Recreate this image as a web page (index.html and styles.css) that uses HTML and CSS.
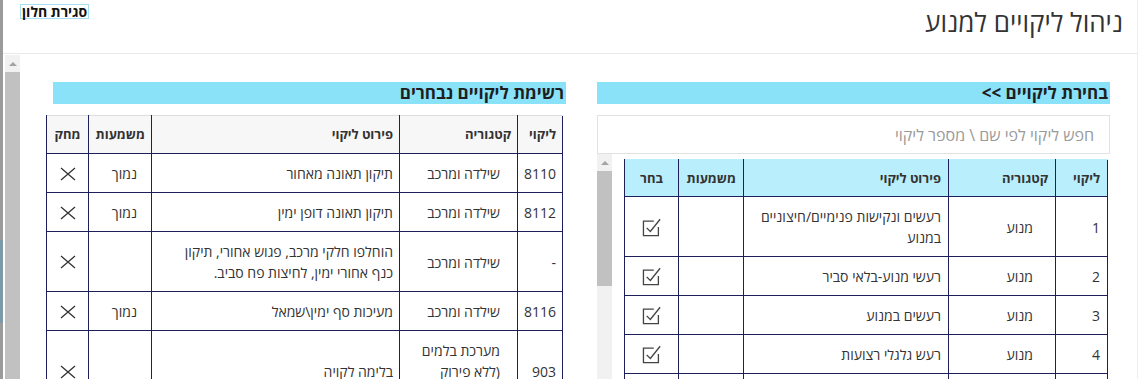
FILE: index.html
```html
<!DOCTYPE html>
<html lang="he">
<head>
<meta charset="utf-8">
<title>ניהול ליקויים למנוע</title>
<link rel="stylesheet" href="styles.css">
</head>
<body>
<div class="frame">
  <div class="edge"><div class="edge-mark"></div></div>
  <div class="window">
    <header class="topbar">
      <button class="close-btn" dir="rtl">סגירת חלון</button>
      <h1 class="title" dir="rtl">ניהול ליקויים למנוע</h1>
    </header>
    <div class="main">
      <div class="scrollbar page-scroll"><div class="sb-arrow"></div><div class="sb-thumb page-thumb"></div></div>
      <div class="content" dir="rtl">
        <section class="panel">
          <div class="panel-head">בחירת ליקויים &gt;&gt;</div>
          <input class="search" type="text" placeholder="חפש ליקוי לפי שם \ מספר ליקוי">
          <div class="pick-box">
            <table class="grid pick">
              <colgroup><col class="c-num"><col class="c-cat"><col class="c-det"><col class="c-mean"><col class="c-act"></colgroup>
              <thead>
                <tr><th>ליקוי</th><th>קטגוריה</th><th>פירוט ליקוי</th><th>משמעות</th><th class="act">בחר</th></tr>
              </thead>
              <tbody>
                <tr><td>1</td><td class="cat">מנוע</td><td>רעשים ונקישות פנימיים/חיצוניים<br>במנוע</td><td class="mean"></td><td class="act"><svg class="ico-check" viewBox="0 0 20 18" width="23" height="21"><path d="M12 3.5H3V16H16V8.5" fill="none" stroke="#444" stroke-width="1.15"/><path d="M5.8 9.3L9 12.5L17.5 1.8" fill="none" stroke="#444" stroke-width="1.15"/></svg></td></tr>
                <tr><td>2</td><td class="cat">מנוע</td><td>רעשי מנוע-בלאי סביר</td><td class="mean"></td><td class="act"><svg class="ico-check" viewBox="0 0 20 18" width="23" height="21"><path d="M12 3.5H3V16H16V8.5" fill="none" stroke="#444" stroke-width="1.15"/><path d="M5.8 9.3L9 12.5L17.5 1.8" fill="none" stroke="#444" stroke-width="1.15"/></svg></td></tr>
                <tr><td>3</td><td class="cat">מנוע</td><td>רעשים במנוע</td><td class="mean"></td><td class="act"><svg class="ico-check" viewBox="0 0 20 18" width="23" height="21"><path d="M12 3.5H3V16H16V8.5" fill="none" stroke="#444" stroke-width="1.15"/><path d="M5.8 9.3L9 12.5L17.5 1.8" fill="none" stroke="#444" stroke-width="1.15"/></svg></td></tr>
                <tr><td>4</td><td class="cat">מנוע</td><td>רעש גלגלי רצועות</td><td class="mean"></td><td class="act"><svg class="ico-check" viewBox="0 0 20 18" width="23" height="21"><path d="M12 3.5H3V16H16V8.5" fill="none" stroke="#444" stroke-width="1.15"/><path d="M5.8 9.3L9 12.5L17.5 1.8" fill="none" stroke="#444" stroke-width="1.15"/></svg></td></tr>
                <tr><td>&nbsp;</td><td class="cat">&nbsp;</td><td>&nbsp;</td><td class="mean"></td><td class="act"></td></tr>
              </tbody>
            </table>
            <div class="scrollbar inner-scroll"><div class="sb-arrow"></div><div class="sb-thumb inner-thumb"></div></div>
          </div>
        </section>
        <section class="panel">
          <div class="panel-head">רשימת ליקויים נבחרים</div>
          <table class="grid chosen">
            <colgroup><col class="c-num"><col class="c-cat"><col class="c-det"><col class="c-mean"><col class="c-act"></colgroup>
            <thead>
              <tr><th>ליקוי</th><th>קטגוריה</th><th>פירוט ליקוי</th><th>משמעות</th><th class="act">מחק</th></tr>
            </thead>
            <tbody>
              <tr><td>8110</td><td class="cat">שילדה ומרכב</td><td>תיקון תאונה מאחור</td><td class="mean">נמוך</td><td class="act"><svg class="ico-x" viewBox="0 0 16 14" width="16" height="14"><path d="M1 1L15 13M15 1L1 13" stroke="#333" stroke-width="1.3" fill="none"/></svg></td></tr>
              <tr><td>8112</td><td class="cat">שילדה ומרכב</td><td>תיקון תאונה דופן ימין</td><td class="mean">נמוך</td><td class="act"><svg class="ico-x" viewBox="0 0 16 14" width="16" height="14"><path d="M1 1L15 13M15 1L1 13" stroke="#333" stroke-width="1.3" fill="none"/></svg></td></tr>
              <tr><td>-</td><td class="cat">שילדה ומרכב</td><td>הוחלפו חלקי מרכב, פגוש אחורי, תיקון<br>כנף אחורי ימין, לחיצות פח סביב.</td><td class="mean"></td><td class="act"><svg class="ico-x" viewBox="0 0 16 14" width="16" height="14"><path d="M1 1L15 13M15 1L1 13" stroke="#333" stroke-width="1.3" fill="none"/></svg></td></tr>
              <tr><td>8116</td><td class="cat">שילדה ומרכב</td><td>מעיכות סף ימין\שמאל</td><td class="mean">נמוך</td><td class="act"><svg class="ico-x" viewBox="0 0 16 14" width="16" height="14"><path d="M1 1L15 13M15 1L1 13" stroke="#333" stroke-width="1.3" fill="none"/></svg></td></tr>
              <tr><td>903</td><td class="cat">מערכת בלמים<br>(ללא פירוק<br>גלגלים)</td><td>בלימה לקויה</td><td class="mean"></td><td class="act"><svg class="ico-x" viewBox="0 0 16 14" width="16" height="14"><path d="M1 1L15 13M15 1L1 13" stroke="#333" stroke-width="1.3" fill="none"/></svg></td></tr>
            </tbody>
          </table>
        </section>
      </div>
    </div>
  </div>
</div>
</body>
</html>
```

FILE: styles.css
```css
* { box-sizing: border-box; }
html, body { margin: 0; height: 100%; overflow: hidden; background: #fff; }
body { font-family: "Open Sans", "DejaVu Sans", sans-serif; color: #333; }

.frame { display: flex; height: 100vh; }
.edge { width: 3px; flex: none; background: #9b9b9b; display: flex; flex-direction: column; }
.edge-mark { margin-top: 240px; height: 83px; background: #7d9ba6; }

.window {
  flex: 1; min-width: 0; display: flex; flex-direction: column;
  margin-right: 3px; border-right: 1px solid #efefef;
}

.topbar {
  height: 54px; flex: none; border-bottom: 1px solid #e9e9e9;
  display: flex; justify-content: space-between; align-items: flex-start;
  padding: 4px 14px 0 17px;
}
.close-btn {
  font-family: "Open Sans", "DejaVu Sans", sans-serif; font-weight: 700; font-size: 14px; line-height: 12px;
  height: 15px; padding: 0 1px; margin: 0;
  border: 1px solid #a6dff2; background: #fff; color: #111;
}
.title {
  margin: 1px 0 0 0; font-weight: 400; font-size: 26px; line-height: 34px; color: #333;
}

.main { flex: 1; min-height: 0; display: flex; overflow: hidden; }

.scrollbar { width: 15px; flex: none; background: #f1f1f1; display: flex; flex-direction: column; }
.sb-arrow { height: 17px; flex: none; display: flex; align-items: center; justify-content: center; }
.sb-arrow::before {
  content: ""; width: 0; height: 0;
  border-left: 4px solid transparent; border-right: 4px solid transparent; border-bottom: 4px solid #a3a3a3;
}
.sb-thumb { background: #c1c1c1; }
.page-scroll { margin: 1px 0 0 2px; }
.page-thumb { flex: 1; }
.inner-thumb { height: 115px; }

.content {
  flex: 1; min-width: 0; display: flex; gap: 31px; align-items: flex-start;
  padding: 28px 27px 0 0;
}

.panel { width: 513px; flex: none; display: flex; flex-direction: column; align-items: flex-start; }
.panel-head {
  align-self: stretch; height: 22px; background: #8ae2f9;
  font-weight: 700; font-size: 17px; line-height: 22px; color: #1e1e1e;
  padding-right: 2px;
}

.search {
  align-self: stretch; margin: 11px 0 0 0; height: 39px;
  border: 1px solid #e2e2e2; padding: 0 15px; background: #fff;
  font-family: "Open Sans", "DejaVu Sans", sans-serif; font-size: 16px; color: #333;
}
.search::placeholder { color: #9a9a9a; }

.pick-box { align-self: stretch; display: flex; align-items: flex-start; height: 240px; }
.inner-scroll { align-self: stretch; margin-right: auto; }

.grid { border-collapse: collapse; table-layout: fixed; font-size: 14px; line-height: 21px; color: #333; }
.grid th, .grid td {
  border: 1px solid #1e1e5a; padding: 9px 6px 8px; text-align: right; vertical-align: middle;
  font-weight: 400;
}
.grid th { font-weight: 700; font-size: 13px; padding: 8px 6px; }
.grid .act { text-align: center; padding-left: 2px; padding-right: 2px; }
.grid svg { display: inline-block; vertical-align: middle; }
.grid td.act { line-height: 0; }

.chosen { width: 516px; margin: 11px 3px 0 0; }
.chosen th { background: #f7f7f7; border-top-color: #dedede; }
.chosen .c-num { width: 45px; }
.chosen .c-cat { width: 118px; }
.chosen .c-det { width: 248px; }
.chosen .c-mean { width: 63px; }
.chosen .c-act { width: 42px; }
.chosen td.cat { padding-right: 17px; }
.chosen td.mean { padding-right: 14px; }

.pick { width: 483px; margin: 5px 2px 0 0; }
.pick th { background: #b9eefc; border-top-color: #b9eefc; line-height: 20px; }
.pick th, .pick td { padding-right: 7px; }
.pick .c-num { width: 52px; }
.pick .c-cat { width: 107px; }
.pick .c-det { width: 205px; }
.pick .c-mean { width: 65px; }
.pick .c-act { width: 54px; }
.pick td.cat { padding-right: 22px; }
```
